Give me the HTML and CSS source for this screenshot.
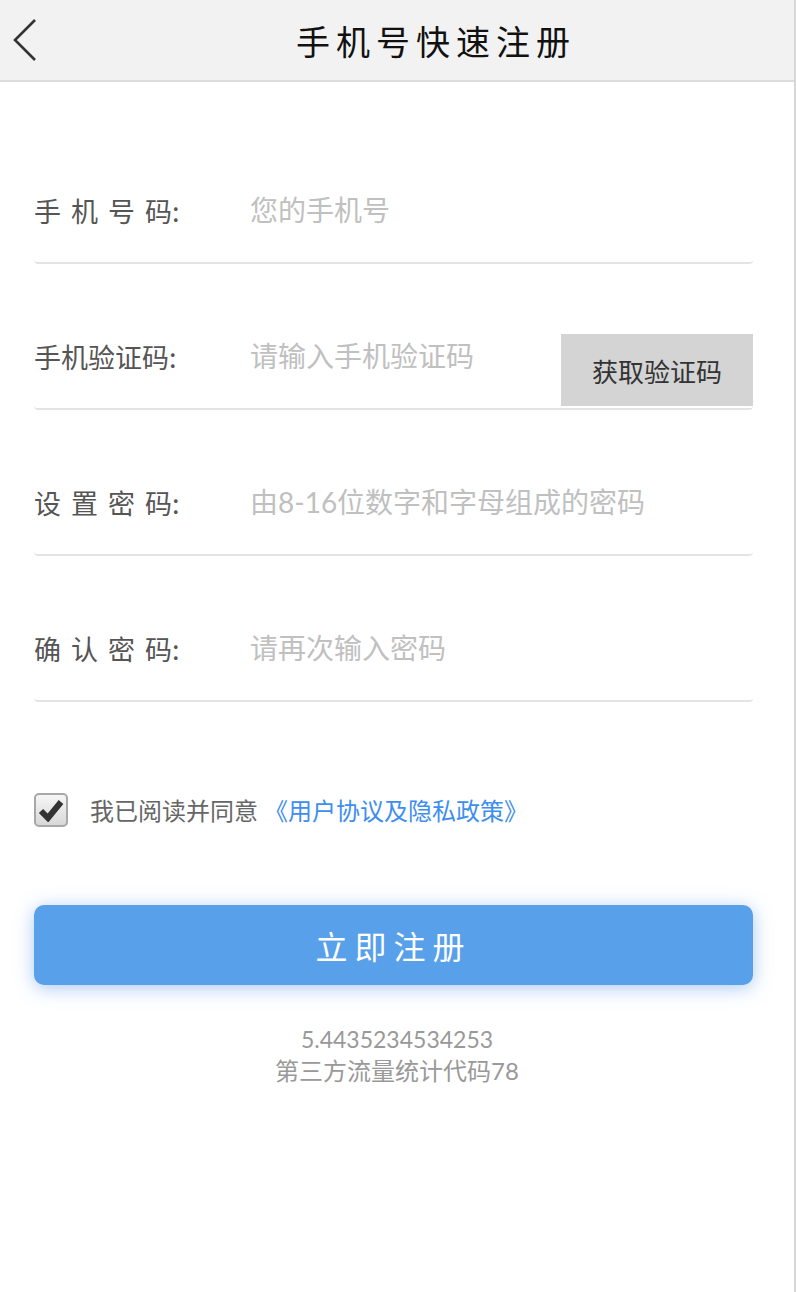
FILE: index.html
```html
<!DOCTYPE html>
<html lang="zh-CN">

<head>
	<meta charset="UTF-8">
	<meta name="viewport" content="width=device-width, initial-scale=1.0">
	<title>手机号快速注册</title>
	<link rel="stylesheet" href="styles.css">
</head>

<body>

	<div class="page">
		<header class="top-bar">
			<a class="back" href="#">
				<svg width="30" height="48" viewBox="0 0 30 48">
					<path d="M25 4 L5 24 L25 44" fill="none" stroke="#333" stroke-width="2.6" />
				</svg>
			</a>
			<h1>手机号快速注册</h1>
		</header>

		<form class="reg-form">
			<div class="row">
				<label for="phone"><span class="spaced">手机号</span>码:</label>
				<input type="text" id="phone" placeholder="您的手机号">
			</div>
			<div class="row">
				<label for="code">手机验证码:</label>
				<input type="text" id="code" placeholder="请输入手机验证码">
				<button type="button" class="get-code">获取验证码</button>
			</div>
			<div class="row">
				<label for="pwd"><span class="spaced">设置密</span>码:</label>
				<input type="password" id="pwd" placeholder="由8-16位数字和字母组成的密码">
			</div>
			<div class="row">
				<label for="pwd2"><span class="spaced">确认密</span>码:</label>
				<input type="password" id="pwd2" placeholder="请再次输入密码">
			</div>

			<div class="agree">
				<span class="check">
					<svg width="26" height="24" viewBox="0 0 26 24">
						<path d="M3 13 L10 20 L23 4" fill="none" stroke="#333" stroke-width="6" stroke-linejoin="miter" />
					</svg>
				</span>
				<span>我已阅读并同意</span>
				<a href="#">《用户协议及隐私政策》</a>
			</div>

			<button type="submit" class="submit">立即注册</button>
		</form>

		<div class="stats">
			<p>5.4435234534253</p>
			<p class="cn">第三方流量统计代码78</p>
		</div>
	</div>

</body>

</html>
```

FILE: styles.css
```css
/* Basic reset */
* {
	margin: 0;
	padding: 0;
	box-sizing: border-box;
}

body {
	background-color: #fff;
	font-family: "Lato", "Noto Sans CJK SC", sans-serif;
	color: #333;
}

.page {
	width: 796px;
	min-height: 1292px;
	border-right: 2px solid #d6d6d6;
}

.top-bar {
	display: flex;
	align-items: center;
	height: 82px;
	background-color: #f2f2f2;
	border-bottom: 2px solid #dcdcdc;
}

.back {
	display: flex;
	width: 48px;
	padding-left: 10px;
}

.top-bar h1 {
	flex: 1;
	padding-left: 30px;
	text-align: center;
	font-size: 34px;
	font-weight: normal;
	letter-spacing: 6px;
	color: #111;
	font-family: "Noto Sans CJK SC", sans-serif;
}

.reg-form {
	display: flex;
	flex-direction: column;
	padding: 0 41px 0 34px;
	margin-top: 36px;
}

.row {
	display: flex;
	align-items: center;
	height: 146px;
	padding-top: 40px;
	border-bottom: 2px solid #e4e4e4;
	border-radius: 0 0 4px 4px;
	position: relative;
}

.row label {
	width: 216px;
	font-size: 27px;
	color: #555;
	font-family: "Noto Sans CJK SC", sans-serif;
}

.row label .spaced {
	letter-spacing: 10px;
}

.row input {
	flex: 1;
	min-width: 0;
	border: none;
	outline: none;
	font-size: 28px;
	color: #333;
	font-family: "Lato", "Noto Sans CJK SC", sans-serif;
}

.row input::placeholder {
	color: #c0c0c0;
}

.get-code {
	position: absolute;
	right: 0;
	bottom: 2px;
	width: 192px;
	height: 72px;
	border: none;
	background-color: #d4d4d4;
	color: #333;
	font-size: 26px;
	font-family: "Noto Sans CJK SC", sans-serif;
}

.agree {
	display: flex;
	align-items: center;
	margin-top: 90px;
	font-size: 24px;
	color: #666;
	font-family: "Noto Sans CJK SC", sans-serif;
}

.check {
	display: flex;
	justify-content: center;
	align-items: center;
	width: 34px;
	height: 34px;
	margin-right: 22px;
	border: 2px solid #a8a8a8;
	border-radius: 5px;
	background: linear-gradient(#f6f6f6, #d8d8d8);
}

.agree a {
	margin-left: 6px;
	color: #3d8ef0;
	text-decoration: none;
}

.submit {
	margin-top: 78px;
	height: 80px;
	border: none;
	border-radius: 10px;
	background-color: #58a0ea;
	box-shadow: 0 3px 18px rgba(88, 150, 240, 0.5);
	color: #fff;
	font-size: 32px;
	letter-spacing: 7px;
	font-family: "Noto Sans CJK SC", sans-serif;
}

.stats {
	margin-top: 38px;
	text-align: center;
	font-size: 23px;
	line-height: 32px;
	color: #999;
}

.stats .cn {
	font-size: 24px;
}
```
